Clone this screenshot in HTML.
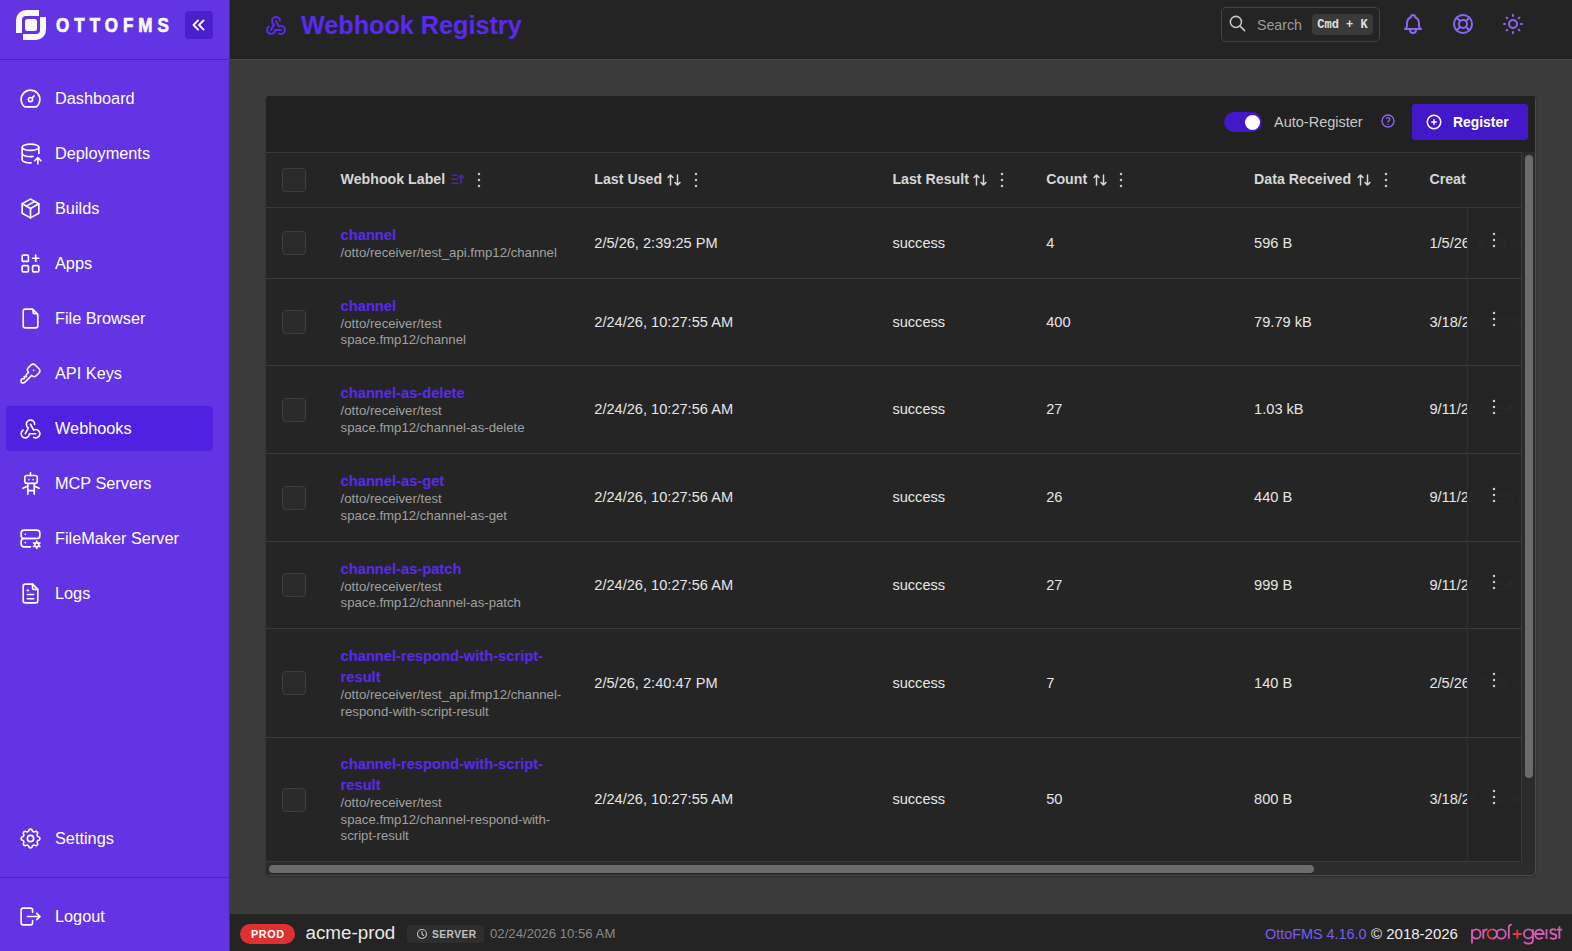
<!DOCTYPE html>
<html><head><meta charset="utf-8">
<style>
*{box-sizing:border-box;margin:0;padding:0}
html,body{width:1572px;height:951px;overflow:hidden;background:#3b3b3b;font-family:"Liberation Sans",sans-serif;}
.abs{position:absolute}
#sb{position:absolute;left:0;top:0;width:229px;height:951px;background:#6334e3;}
#sbhead{position:absolute;left:0;top:0;width:229px;height:60px;border-bottom:1px solid #4a22cf}
.logo{position:absolute;left:16px;top:10px;width:30px;height:30px}
.brand{position:absolute;left:55.5px;top:12px;font-size:20px;font-weight:bold;letter-spacing:5.9px;color:#f8f9fa;line-height:26px;-webkit-text-stroke:0.7px #f8f9fa;transform:scaleX(0.85);transform-origin:0 0;white-space:nowrap}
.collapse{position:absolute;left:185px;top:11px;width:28px;height:28px;border-radius:4px;background:#4a1fcc}
.nav{position:absolute;left:6px;width:207px;height:45px;border-radius:4px;color:#fff;font-size:16.3px;line-height:45px}
.nav.active{background:#4f22e2}
.nav svg{position:absolute;left:12px;top:10px;width:25px;height:25px}
.nav span{position:absolute;left:49px;top:0}
#sbdiv{position:absolute;left:0;top:877px;width:229px;height:1px;background:#4a22cf}
#sbedge{position:absolute;left:229px;top:0;width:1px;height:951px;background:#3d3d35}
#hdr{position:absolute;left:230px;top:0;width:1342px;height:60px;background:#242424;border-bottom:1px solid #474747}
#footer{position:absolute;left:230px;top:914px;width:1342px;height:37px;background:#242424}
#card{position:absolute;left:266px;top:96px;width:1270px;height:780px;background:#212121;border-radius:4px;overflow:hidden;box-shadow:0 1px 2px rgba(0,0,0,0.25)}
.cedge{position:absolute;left:0;top:0;width:1270px;height:780px;border-radius:4px;box-shadow:inset -1px -1px 0 #4a4a4a;pointer-events:none}

.hicon{position:absolute;width:24px;height:24px}
#title{position:absolute;left:301px;top:8px;font-size:25.2px;font-weight:bold;color:#5a2af0;line-height:34px;white-space:nowrap}
#search{position:absolute;left:1221px;top:7px;width:159px;height:35px;border:1px solid #444;border-radius:5px}
#search .t{position:absolute;left:35px;top:9px;font-size:14.2px;color:#9c9c9c;line-height:17px}
#search .k{position:absolute;left:90px;top:6px;width:61px;height:21px;border-radius:4px;background:#3a3a3a;color:#e0e0e0;font-family:"Liberation Mono",monospace;font-size:12px;font-weight:bold;line-height:23px;text-align:center;white-space:pre}

#card .tb{position:absolute;left:0;top:0;width:1270px;height:56px;background:#212121}
#tarea{position:absolute;left:0;top:56px;width:1256px;height:710px;background:#252525;overflow:hidden;border-right:1px solid #3a3a3a}
#tabs{position:absolute;left:0;top:-56px;width:1255px;height:765px}
.hl{position:absolute;left:0;width:1255px;height:1px;background:#3a3a3a}
.cb{position:absolute;width:24px;height:24px;border:1px solid #3e3e3e;border-radius:4px;background:#2a2a2a}
.th{position:absolute;font-size:14.2px;font-weight:bold;color:#d6d6d6;line-height:20px;white-space:nowrap}
.ic{position:absolute;width:14px;height:12px}
.ic svg{display:block;width:14px;height:12px}
.dw{position:absolute;width:4px;height:16px}
.dots{display:block;width:4px;height:16px;fill:#c8c8c8}
.row{position:absolute;left:0;width:1255px}
.lab{position:absolute;top:0;display:flex;align-items:center;white-space:nowrap}
.ln{font-size:14.7px;font-weight:bold;color:#5a2af0;line-height:21px}
.pt{font-size:13.2px;color:#a0a0a0;line-height:16.5px;margin-top:-1px}
.td{position:absolute;top:0;font-size:14.6px;color:#e6e6e6;white-space:nowrap}
.sticky{position:absolute;left:1200.5px;top:0;width:54.5px;background:rgba(37,37,37,0.985);border-left:1px solid #2f2f2f}

.tog{position:absolute;left:958px;top:16px;width:38px;height:20px;border-radius:10px;background:#4318c8}
.tog i{position:absolute;left:20.5px;top:2.5px;width:15px;height:15px;border-radius:50%;background:#fff}
.ar{position:absolute;left:1008px;top:16px;font-size:14.5px;color:#c8c8c8;line-height:20px;white-space:nowrap}
.qh{position:absolute;left:1114px;top:17px;width:16px;height:16px}
.regbtn{position:absolute;left:1146px;top:8px;width:116px;height:36px;border-radius:3px;background:#4318c8}
.regbtn svg{position:absolute;left:12.5px;top:8.5px;width:18px;height:18px}
.regbtn span{position:absolute;left:41px;top:8px;font-size:13.9px;font-weight:bold;color:#fff;line-height:20px}
.vtrack{position:absolute;left:1256px;top:56px;width:14px;height:710px;background:#2b2b2b}
.vthumb{position:absolute;left:1259px;top:59px;width:8px;height:623px;border-radius:4px;background:#6b6b6b}
.htrack{position:absolute;left:0;top:766px;width:1270px;height:14px;background:#2c2c2c}
.hthumb{position:absolute;left:3px;top:769px;width:1045px;height:8px;border-radius:4px;background:#6b6b6b}

.prod{position:absolute;left:10px;top:10px;width:55px;height:20px;border-radius:10px;background:#e03131;color:#fff;font-size:10.8px;font-weight:bold;letter-spacing:0.6px;line-height:20px;text-align:center;text-indent:0.6px}
.env{position:absolute;left:75.5px;top:6px;font-size:18.8px;color:#e8e8e8;line-height:26px;white-space:nowrap}
.srv{position:absolute;left:177px;top:11px;width:77px;height:18px;border-radius:4px;background:#2e2e2e}
.srv svg{position:absolute;left:9px;top:3px;width:12px;height:12px}
.srv span{position:absolute;left:25px;top:1px;font-size:10.2px;font-weight:bold;letter-spacing:0.5px;color:#c0c0c0;line-height:18px}
.fdate{position:absolute;left:260px;top:10px;font-size:13.2px;color:#8a8a8a;line-height:20px;white-space:nowrap}
.fver{position:absolute;left:1035px;top:10px;font-size:14.4px;color:#7b5cf0;line-height:20px;white-space:nowrap}
.fcopy{position:absolute;left:1141px;top:10px;font-size:15px;color:#eeeeee;line-height:20px;white-space:nowrap}
.pg{position:absolute;left:1240px;top:4px;font-size:21px;color:#d6529c;line-height:28px;white-space:nowrap;letter-spacing:-0.5px}
</style></head><body>
<div id="sb">
  <div id="sbhead">
    <svg class="logo" viewBox="0 0 30 30"><path fill="#f8f9fa" d="M0 23V10A10 10 0 0 1 10 0H23V6H10A4 4 0 0 0 6 10V23Z"/><path fill="#f8f9fa" d="M30 7V20A10 10 0 0 1 20 30H7V24H20A4 4 0 0 0 24 20V7Z"/><rect x="9" y="9" width="12" height="12" rx="2.5" fill="#f8f9fa"/></svg>
    <div class="brand">OTTOFMS</div>
    <div class="collapse"><svg style="position:absolute;left:3px;top:3px;width:22px;height:22px" viewBox="0 0 24 24" fill="none" stroke="#fff" stroke-width="2" stroke-linecap="round" stroke-linejoin="round"><path d="M11 7l-5 5l5 5"/><path d="M17 7l-5 5l5 5"/></svg></div>
  </div>
  <div class="nav" style="top:76px"><svg viewBox="0 0 24 24" fill="none" stroke="#fff" stroke-width="1.55" stroke-linecap="round" stroke-linejoin="round"><path d="M12 13m-2 0a2 2 0 1 0 4 0a2 2 0 1 0 -4 0"/><path d="M13.45 11.55l2.05 -2.05"/><path d="M6.4 20a9 9 0 1 1 11.2 0z"/></svg><span>Dashboard</span></div>
  <div class="nav" style="top:131px"><svg viewBox="0 0 24 24" fill="none" stroke="#fff" stroke-width="1.55" stroke-linecap="round" stroke-linejoin="round"><path d="M4 6c0 1.657 3.582 3 8 3s8 -1.343 8 -3s-3.582 -3 -8 -3s-8 1.343 -8 3"/><path d="M4 6v6c0 1.657 3.582 3 8 3c.856 0 1.68 -.05 2.454 -.144"/><path d="M20 12v-6"/><path d="M4 12v6c0 1.657 3.582 3 8 3c.171 0 .341 -.002 .51 -.006"/><path d="M19 22v-6"/><path d="M22 19l-3 -3l-3 3"/></svg><span>Deployments</span></div>
  <div class="nav" style="top:186px"><svg viewBox="0 0 24 24" fill="none" stroke="#fff" stroke-width="1.55" stroke-linecap="round" stroke-linejoin="round"><path d="M12 3l8 4.5l0 9l-8 4.5l-8 -4.5l0 -9l8 -4.5"/><path d="M12 12l8 -4.5"/><path d="M12 12l0 9"/><path d="M12 12l-8 -4.5"/><path d="M16 5.25l-8 4.5"/></svg><span>Builds</span></div>
  <div class="nav" style="top:241px"><svg viewBox="0 0 24 24" fill="none" stroke="#fff" stroke-width="1.55" stroke-linecap="round" stroke-linejoin="round"><path d="M4 4m0 1a1 1 0 0 1 1 -1h4a1 1 0 0 1 1 1v4a1 1 0 0 1 -1 1h-4a1 1 0 0 1 -1 -1z"/><path d="M4 14m0 1a1 1 0 0 1 1 -1h4a1 1 0 0 1 1 1v4a1 1 0 0 1 -1 1h-4a1 1 0 0 1 -1 -1z"/><path d="M14 14m0 1a1 1 0 0 1 1 -1h4a1 1 0 0 1 1 1v4a1 1 0 0 1 -1 1h-4a1 1 0 0 1 -1 -1z"/><path d="M14 7l6 0"/><path d="M17 4l0 6"/></svg><span>Apps</span></div>
  <div class="nav" style="top:296px"><svg viewBox="0 0 24 24" fill="none" stroke="#fff" stroke-width="1.55" stroke-linecap="round" stroke-linejoin="round"><path d="M14.5 3.5v2.5a1.5 1.5 0 0 0 1.5 1.5h2.5"/><path d="M17 21h-10a2 2 0 0 1 -2 -2v-14a2 2 0 0 1 2 -2h7l5 5v11a2 2 0 0 1 -2 2z"/></svg><span>File Browser</span></div>
  <div class="nav" style="top:351px"><svg viewBox="0 0 24 24" fill="none" stroke="#fff" stroke-width="1.55" stroke-linecap="round" stroke-linejoin="round"><path d="M16.555 3.843l3.602 3.602a2.877 2.877 0 0 1 0 4.069l-2.643 2.643a2.877 2.877 0 0 1 -4.069 0l-.301 -.301l-6.558 6.558a2 2 0 0 1 -1.239 .578l-.175 .008h-1.172a1 1 0 0 1 -.993 -.883l-.007 -.117v-1.172a2 2 0 0 1 .467 -1.284l.119 -.13l.414 -.414h2v-2h2v-2l2.144 -2.144l-.301 -.301a2.877 2.877 0 0 1 0 -4.069l2.643 -2.643a2.877 2.877 0 0 1 4.069 0z"/><path d="M15 9h.01"/></svg><span>API Keys</span></div>
  <div class="nav active" style="top:406px"><svg viewBox="0 0 24 24" fill="none" stroke="#fff" stroke-width="1.55" stroke-linecap="round" stroke-linejoin="round"><path d="M4.876 13.61a4 4 0 1 0 6.124 3.39h6"/><path d="M15.066 20.502a4 4 0 1 0 1.934 -7.502c-.706 0 -1.424 .179 -2 .5l-3 -5.5"/><path d="M16 8a4 4 0 1 0 -8 0c0 1.506 .77 2.818 2 3.5l-3 5.5"/></svg><span>Webhooks</span></div>
  <div class="nav" style="top:461px"><svg viewBox="0 0 24 24" fill="none" stroke="#fff" stroke-width="1.55" stroke-linecap="round" stroke-linejoin="round"><path d="M12 1.8v2.5"/><rect x="6.5" y="4.3" width="12" height="7.6" rx="2"/><path d="M10.5 8.3h.01"/><path d="M14.5 8.3h.01"/><path d="M9.4 12v10.2"/><path d="M15.6 12v10.2"/><path d="M9.4 18.8h6.2"/><path d="M9.4 14.4l-4.6 2.2"/><path d="M15.6 14.4l4.6 2.2"/></svg><span>MCP Servers</span></div>
  <div class="nav" style="top:516px"><svg viewBox="0 0 24 24" fill="none" stroke="#fff" stroke-width="1.55" stroke-linecap="round" stroke-linejoin="round"><path d="M3 4m0 3a3 3 0 0 1 3 -3h12a3 3 0 0 1 3 3v2a3 3 0 0 1 -3 3h-12a3 3 0 0 1 -3 -3z"/><path d="M12 20h-6a3 3 0 0 1 -3 -3v-2a3 3 0 0 1 3 -3h10.5"/><path d="M18 18m-2 0a2 2 0 1 0 4 0a2 2 0 1 0 -4 0"/><path d="M18 14.5v1.5"/><path d="M18 20v1.5"/><path d="M21.032 16.25l-1.299 .75"/><path d="M16.27 19l-1.3 .75"/><path d="M14.97 16.25l1.3 .75"/><path d="M19.733 19l1.3 .75"/><path d="M7 8v.01"/><path d="M7 16v.01"/></svg><span>FileMaker Server</span></div>
  <div class="nav" style="top:571px"><svg viewBox="0 0 24 24" fill="none" stroke="#fff" stroke-width="1.55" stroke-linecap="round" stroke-linejoin="round"><path d="M14 3v4a1 1 0 0 0 1 1h4"/><path d="M17 21h-10a2 2 0 0 1 -2 -2v-14a2 2 0 0 1 2 -2h7l5 5v11a2 2 0 0 1 -2 2z"/><path d="M9 9l1 0"/><path d="M9 13l6 0"/><path d="M9 17l6 0"/></svg><span>Logs</span></div>
  <div class="nav" style="top:816px"><svg viewBox="0 0 24 24" fill="none" stroke="#fff" stroke-width="1.55" stroke-linecap="round" stroke-linejoin="round"><path d="M10.325 4.317c.426 -1.756 2.924 -1.756 3.35 0a1.724 1.724 0 0 0 2.573 1.066c1.543 -.94 3.31 .826 2.37 2.37a1.724 1.724 0 0 0 1.065 2.572c1.756 .426 1.756 2.924 0 3.35a1.724 1.724 0 0 0 -1.066 2.573c.94 1.543 -.826 3.31 -2.37 2.37a1.724 1.724 0 0 0 -2.572 1.065c-.426 1.756 -2.924 1.756 -3.35 0a1.724 1.724 0 0 0 -2.573 -1.066c-1.543 .94 -3.31 -.826 -2.37 -2.37a1.724 1.724 0 0 0 -1.065 -2.572c-1.756 -.426 -1.756 -2.924 0 -3.35a1.724 1.724 0 0 0 1.066 -2.573c-.94 -1.543 .826 -3.31 2.37 -2.37c1 .608 2.296 .07 2.572 -1.065z"/><path d="M9 12a3 3 0 1 0 6 0a3 3 0 0 0 -6 0"/></svg><span>Settings</span></div>
  <div class="nav" style="top:894px"><svg viewBox="0 0 24 24" fill="none" stroke="#fff" stroke-width="1.55" stroke-linecap="round" stroke-linejoin="round"><path d="M14 8v-2a2 2 0 0 0 -2 -2h-7a2 2 0 0 0 -2 2v12a2 2 0 0 0 2 2h7a2 2 0 0 0 2 -2v-2"/><path d="M9 12h12l-3 -3"/><path d="M18 15l3 -3"/></svg><span>Logout</span></div>
  <div id="sbdiv"></div>
</div>
<div id="sbedge"></div>
<div id="hdr">
  <svg class="hicon" style="left:34px;top:13px" viewBox="0 0 24 24" fill="none" stroke="#5a2af0" stroke-width="2" stroke-linecap="round" stroke-linejoin="round"><path d="M4.876 13.61a4 4 0 1 0 6.124 3.39h6"/><path d="M15.066 20.502a4 4 0 1 0 1.934 -7.502c-.706 0 -1.424 .179 -2 .5l-3 -5.5"/><path d="M16 8a4 4 0 1 0 -8 0c0 1.506 .77 2.818 2 3.5l-3 5.5"/></svg>
  <div id="title" style="left:71px">Webhook Registry</div>
  <div id="search" style="left:991px"><svg style="position:absolute;left:6px;top:6px;width:19px;height:19px" viewBox="0 0 24 24" fill="none" stroke="#c8c8c8" stroke-width="1.9" stroke-linecap="round" stroke-linejoin="round"><path d="M10 10m-7 0a7 7 0 1 0 14 0a7 7 0 1 0 -14 0"/><path d="M21 21l-6 -6"/></svg><span class="t">Search</span><span class="k">Cmd + K</span></div>
  <svg class="hicon" style="left:1171px;top:12px" viewBox="0 0 24 24" fill="none" stroke="#8a68f5" stroke-width="2" stroke-linecap="round" stroke-linejoin="round"><path d="M10 5a2 2 0 1 1 4 0a7 7 0 0 1 4 6v3a4 4 0 0 0 2 3h-16a4 4 0 0 0 2 -3v-3a7 7 0 0 1 4 -6"/><path d="M9 17v1a3 3 0 0 0 6 0v-1"/></svg>
  <svg class="hicon" style="left:1221px;top:12px" viewBox="0 0 24 24" fill="none" stroke="#8a68f5" stroke-width="2" stroke-linecap="round" stroke-linejoin="round"><path d="M12 12m-4 0a4 4 0 1 0 8 0a4 4 0 1 0 -8 0"/><path d="M12 12m-9 0a9 9 0 1 0 18 0a9 9 0 1 0 -18 0"/><path d="M15 15l3.35 3.35"/><path d="M9 15l-3.35 3.35"/><path d="M5.65 5.65l3.35 3.35"/><path d="M18.35 5.65l-3.35 3.35"/></svg>
  <svg class="hicon" style="left:1271px;top:12px" viewBox="0 0 24 24" fill="none" stroke="#8a68f5" stroke-width="2" stroke-linecap="round" stroke-linejoin="round"><path d="M12 12m-4 0a4 4 0 1 0 8 0a4 4 0 1 0 -8 0"/><path d="M3 12h1m8 -9v1m8 8h1m-9 8v1m-6.4 -15.4l.7 .7m12.1 -.7l-.7 .7m0 11.4l.7 .7m-12.1 -.7l-.7 .7"/></svg>
</div>
<div id="card"><div class="tb"><div class="tog"><i></i></div><div class="ar">Auto-Register</div>
<svg class="qh" viewBox="0 0 24 24" fill="none" stroke="#8a68f5" stroke-width="2" stroke-linecap="round" stroke-linejoin="round"><path d="M12 12m-9 0a9 9 0 1 0 18 0a9 9 0 1 0 -18 0"/><path d="M12 17v.01"/><path d="M12 13.5a1.5 1.5 0 0 1 1 -1.5a2.6 2.6 0 1 0 -3 -4"/></svg>
<div class="regbtn"><svg viewBox="0 0 24 24" fill="none" stroke="#fff" stroke-width="2" stroke-linecap="round" stroke-linejoin="round"><path d="M3 12a9 9 0 1 0 18 0a9 9 0 0 0 -18 0"/><path d="M9 12h6"/><path d="M12 9v6"/></svg><span>Register</span></div></div><div id="tarea"><div id="tabs"><div class="hl" style="top:56px"></div>
<div class="hl" style="top:111px"></div>
<div class="hl" style="top:182px"></div>
<div class="hl" style="top:269px"></div>
<div class="hl" style="top:357px"></div>
<div class="hl" style="top:445px"></div>
<div class="hl" style="top:532px"></div>
<div class="hl" style="top:641px"></div>
<div class="hl" style="top:765px"></div>
<div class="cb" style="left:16px;top:72px"></div>
<div class="th" style="left:74.6px;top:73px">Webhook Label</div>
<div class="ic" style="left:185.0px;top:77.5px"><svg viewBox="0 0 14 12" fill="none" stroke="#4a25b0" stroke-width="1.6" stroke-linecap="round" stroke-linejoin="round"><path d="M1 1.2h5M1 5.2h5M1 9.2h6M10 10V1M7.8 3.4L10 1.1l2.2 2.3"/></svg></div>
<div class="dw" style="left:211.0px;top:75.5px"><svg class="dots" viewBox="0 0 4 16"><circle cx="2" cy="2" r="1.25"/><circle cx="2" cy="8" r="1.25"/><circle cx="2" cy="14" r="1.25"/></svg></div>
<div class="th" style="left:328.3px;top:73px">Last Used</div>
<div class="ic" style="left:401.2px;top:77.5px"><svg viewBox="0 0 14 12" fill="none" stroke="#d6d6d6" stroke-width="1.5" stroke-linecap="round" stroke-linejoin="round"><path d="M3.5 11V1M1 3.5L3.5 1 6 3.5M10.5 1v10M8 8.5l2.5 2.5 2.5-2.5"/></svg></div>
<div class="dw" style="left:427.6px;top:75.5px"><svg class="dots" viewBox="0 0 4 16"><circle cx="2" cy="2" r="1.25"/><circle cx="2" cy="8" r="1.25"/><circle cx="2" cy="14" r="1.25"/></svg></div>
<div class="th" style="left:626.4px;top:73px">Last Result</div>
<div class="ic" style="left:707.4px;top:77.5px"><svg viewBox="0 0 14 12" fill="none" stroke="#d6d6d6" stroke-width="1.5" stroke-linecap="round" stroke-linejoin="round"><path d="M3.5 11V1M1 3.5L3.5 1 6 3.5M10.5 1v10M8 8.5l2.5 2.5 2.5-2.5"/></svg></div>
<div class="dw" style="left:734.0px;top:75.5px"><svg class="dots" viewBox="0 0 4 16"><circle cx="2" cy="2" r="1.25"/><circle cx="2" cy="8" r="1.25"/><circle cx="2" cy="14" r="1.25"/></svg></div>
<div class="th" style="left:780.2px;top:73px">Count</div>
<div class="ic" style="left:826.5px;top:77.5px"><svg viewBox="0 0 14 12" fill="none" stroke="#d6d6d6" stroke-width="1.5" stroke-linecap="round" stroke-linejoin="round"><path d="M3.5 11V1M1 3.5L3.5 1 6 3.5M10.5 1v10M8 8.5l2.5 2.5 2.5-2.5"/></svg></div>
<div class="dw" style="left:853.0px;top:75.5px"><svg class="dots" viewBox="0 0 4 16"><circle cx="2" cy="2" r="1.25"/><circle cx="2" cy="8" r="1.25"/><circle cx="2" cy="14" r="1.25"/></svg></div>
<div class="th" style="left:988.1px;top:73px">Data Received</div>
<div class="ic" style="left:1091.2px;top:77.5px"><svg viewBox="0 0 14 12" fill="none" stroke="#d6d6d6" stroke-width="1.5" stroke-linecap="round" stroke-linejoin="round"><path d="M3.5 11V1M1 3.5L3.5 1 6 3.5M10.5 1v10M8 8.5l2.5 2.5 2.5-2.5"/></svg></div>
<div class="dw" style="left:1117.7px;top:75.5px"><svg class="dots" viewBox="0 0 4 16"><circle cx="2" cy="2" r="1.25"/><circle cx="2" cy="8" r="1.25"/><circle cx="2" cy="14" r="1.25"/></svg></div>
<div class="th" style="left:1163.4px;top:73px;width:38.1px;overflow:hidden;white-space:nowrap">Creat</div>
<div class="row" style="top:112px;height:70px">
<div class="cb" style="left:16px;top:23.0px"></div>
<div class="lab" style="left:74.6px;height:70px"><div><div class="ln">channel</div><div class="pt">/otto/receiver/test_api.fmp12/channel</div></div></div>
<div class="td" style="left:328.3px;height:70px;line-height:70px">2/5/26, 2:39:25 PM</div>
<div class="td" style="left:626.4px;height:70px;line-height:70px">success</div>
<div class="td" style="left:780.2px;height:70px;line-height:70px">4</div>
<div class="td" style="left:988.1px;height:70px;line-height:70px">596 B</div>
<div class="td" style="left:1163.4px;height:70px;line-height:70px">1/5/26, 6:39:55 PM</div>
<div class="sticky" style="height:70px"><div class="dw" style="left:24.5px;top:24.0px"><svg class="dots" viewBox="0 0 4 16"><circle cx="2" cy="2" r="1.25"/><circle cx="2" cy="8" r="1.25"/><circle cx="2" cy="14" r="1.25"/></svg></div></div>
</div>
<div class="row" style="top:183px;height:86px">
<div class="cb" style="left:16px;top:31.0px"></div>
<div class="lab" style="left:74.6px;height:86px"><div><div class="ln">channel</div><div class="pt">/otto/receiver/test<br>space.fmp12/channel</div></div></div>
<div class="td" style="left:328.3px;height:86px;line-height:86px">2/24/26, 10:27:55 AM</div>
<div class="td" style="left:626.4px;height:86px;line-height:86px">success</div>
<div class="td" style="left:780.2px;height:86px;line-height:86px">400</div>
<div class="td" style="left:988.1px;height:86px;line-height:86px">79.79 kB</div>
<div class="td" style="left:1163.4px;height:86px;line-height:86px">3/18/25, 10:06:12 AM</div>
<div class="sticky" style="height:86px"><div class="dw" style="left:24.5px;top:32.0px"><svg class="dots" viewBox="0 0 4 16"><circle cx="2" cy="2" r="1.25"/><circle cx="2" cy="8" r="1.25"/><circle cx="2" cy="14" r="1.25"/></svg></div></div>
</div>
<div class="row" style="top:270px;height:87px">
<div class="cb" style="left:16px;top:31.5px"></div>
<div class="lab" style="left:74.6px;height:87px"><div><div class="ln">channel-as-delete</div><div class="pt">/otto/receiver/test<br>space.fmp12/channel-as-delete</div></div></div>
<div class="td" style="left:328.3px;height:87px;line-height:87px">2/24/26, 10:27:56 AM</div>
<div class="td" style="left:626.4px;height:87px;line-height:87px">success</div>
<div class="td" style="left:780.2px;height:87px;line-height:87px">27</div>
<div class="td" style="left:988.1px;height:87px;line-height:87px">1.03 kB</div>
<div class="td" style="left:1163.4px;height:87px;line-height:87px">9/11/25, 1:54:10 PM</div>
<div class="sticky" style="height:87px"><div class="dw" style="left:24.5px;top:32.5px"><svg class="dots" viewBox="0 0 4 16"><circle cx="2" cy="2" r="1.25"/><circle cx="2" cy="8" r="1.25"/><circle cx="2" cy="14" r="1.25"/></svg></div></div>
</div>
<div class="row" style="top:358px;height:87px">
<div class="cb" style="left:16px;top:31.5px"></div>
<div class="lab" style="left:74.6px;height:87px"><div><div class="ln">channel-as-get</div><div class="pt">/otto/receiver/test<br>space.fmp12/channel-as-get</div></div></div>
<div class="td" style="left:328.3px;height:87px;line-height:87px">2/24/26, 10:27:56 AM</div>
<div class="td" style="left:626.4px;height:87px;line-height:87px">success</div>
<div class="td" style="left:780.2px;height:87px;line-height:87px">26</div>
<div class="td" style="left:988.1px;height:87px;line-height:87px">440 B</div>
<div class="td" style="left:1163.4px;height:87px;line-height:87px">9/11/25, 1:55:02 PM</div>
<div class="sticky" style="height:87px"><div class="dw" style="left:24.5px;top:32.5px"><svg class="dots" viewBox="0 0 4 16"><circle cx="2" cy="2" r="1.25"/><circle cx="2" cy="8" r="1.25"/><circle cx="2" cy="14" r="1.25"/></svg></div></div>
</div>
<div class="row" style="top:446px;height:86px">
<div class="cb" style="left:16px;top:31.0px"></div>
<div class="lab" style="left:74.6px;height:86px"><div><div class="ln">channel-as-patch</div><div class="pt">/otto/receiver/test<br>space.fmp12/channel-as-patch</div></div></div>
<div class="td" style="left:328.3px;height:86px;line-height:86px">2/24/26, 10:27:56 AM</div>
<div class="td" style="left:626.4px;height:86px;line-height:86px">success</div>
<div class="td" style="left:780.2px;height:86px;line-height:86px">27</div>
<div class="td" style="left:988.1px;height:86px;line-height:86px">999 B</div>
<div class="td" style="left:1163.4px;height:86px;line-height:86px">9/11/25, 1:54:40 PM</div>
<div class="sticky" style="height:86px"><div class="dw" style="left:24.5px;top:32.0px"><svg class="dots" viewBox="0 0 4 16"><circle cx="2" cy="2" r="1.25"/><circle cx="2" cy="8" r="1.25"/><circle cx="2" cy="14" r="1.25"/></svg></div></div>
</div>
<div class="row" style="top:533px;height:108px">
<div class="cb" style="left:16px;top:42.0px"></div>
<div class="lab" style="left:74.6px;height:108px"><div><div class="ln">channel-respond-with-script-<br>result</div><div class="pt">/otto/receiver/test_api.fmp12/channel-<br>respond-with-script-result</div></div></div>
<div class="td" style="left:328.3px;height:108px;line-height:108px">2/5/26, 2:40:47 PM</div>
<div class="td" style="left:626.4px;height:108px;line-height:108px">success</div>
<div class="td" style="left:780.2px;height:108px;line-height:108px">7</div>
<div class="td" style="left:988.1px;height:108px;line-height:108px">140 B</div>
<div class="td" style="left:1163.4px;height:108px;line-height:108px">2/5/26, 2:40:11 PM</div>
<div class="sticky" style="height:108px"><div class="dw" style="left:24.5px;top:43.0px"><svg class="dots" viewBox="0 0 4 16"><circle cx="2" cy="2" r="1.25"/><circle cx="2" cy="8" r="1.25"/><circle cx="2" cy="14" r="1.25"/></svg></div></div>
</div>
<div class="row" style="top:642px;height:123px">
<div class="cb" style="left:16px;top:49.5px"></div>
<div class="lab" style="left:74.6px;height:123px"><div><div class="ln">channel-respond-with-script-<br>result</div><div class="pt">/otto/receiver/test<br>space.fmp12/channel-respond-with-<br>script-result</div></div></div>
<div class="td" style="left:328.3px;height:123px;line-height:123px">2/24/26, 10:27:55 AM</div>
<div class="td" style="left:626.4px;height:123px;line-height:123px">success</div>
<div class="td" style="left:780.2px;height:123px;line-height:123px">50</div>
<div class="td" style="left:988.1px;height:123px;line-height:123px">800 B</div>
<div class="td" style="left:1163.4px;height:123px;line-height:123px">3/18/25, 10:06:40 AM</div>
<div class="sticky" style="height:123px"><div class="dw" style="left:24.5px;top:50.5px"><svg class="dots" viewBox="0 0 4 16"><circle cx="2" cy="2" r="1.25"/><circle cx="2" cy="8" r="1.25"/><circle cx="2" cy="14" r="1.25"/></svg></div></div>
</div>
</div></div><div class="vtrack"></div><div class="vthumb"></div><div class="htrack"></div><div class="hthumb"></div><div class="cedge"></div></div>
<div id="footer"><div class="prod">PROD</div><div class="env">acme-prod</div>
<div class="srv"><svg viewBox="0 0 24 24" fill="none" stroke="#c0c0c0" stroke-width="2.2" stroke-linecap="round" stroke-linejoin="round"><path d="M3 12a9 9 0 1 0 18 0a9 9 0 0 0 -18 0"/><path d="M12 7v5l3 3"/></svg><span>SERVER</span></div>
<div class="fdate">02/24/2026 10:56 AM</div>
<div class="fver">OttoFMS 4.16.0</div><div class="fcopy">© 2018-2026</div><svg style="position:absolute;left:1236px;top:6px;width:102px;height:28px" viewBox="1466 920 102 28" fill="none" stroke-width="1.8" stroke-linecap="butt">
<g stroke="#d85ab8"><path d="M1472 929.2V943.6"/><ellipse cx="1476.3" cy="934" rx="4.3" ry="4.7"/><path d="M1483.3 938.8V929.2M1483.3 933.4Q1484 929.3 1487.6 929.4"/><path d="M1492.3 929.4A4.6 4.6 0 0 1 1492.3 938.6"/><circle cx="1501.2" cy="934" r="4.6"/><path d="M1508.8 938.8V927.6Q1508.8 924.6 1511.8 924.6"/><circle cx="1528.4" cy="933.8" r="4.5"/><path d="M1532.9 929.2V940Q1532.9 943.7 1528.5 943.7Q1525.6 943.7 1524.2 941.8"/><path d="M1535 934H1543.8A4.4 4.6 0 1 0 1542.6 937.4"/><path d="M1546.5 929.2V938.8"/><path d="M1556.2 930.6Q1555 929.2 1553.2 929.2Q1550.3 929.2 1550.4 931.6Q1550.6 933.6 1553.3 934Q1556.5 934.5 1556.4 936.4Q1556.3 938.8 1553.2 938.8Q1551 938.8 1550 937.4"/><path d="M1559.4 926.2V938.8M1557 929.6H1562.2"/></g>
<g stroke="#e63b3b"><path d="M1492.3 929.4A4.6 4.6 0 0 0 1492.3 938.6"/><path d="M1512.7 934H1521.8M1517.3 929.6V938.8"/></g></svg></div>
</body></html>
